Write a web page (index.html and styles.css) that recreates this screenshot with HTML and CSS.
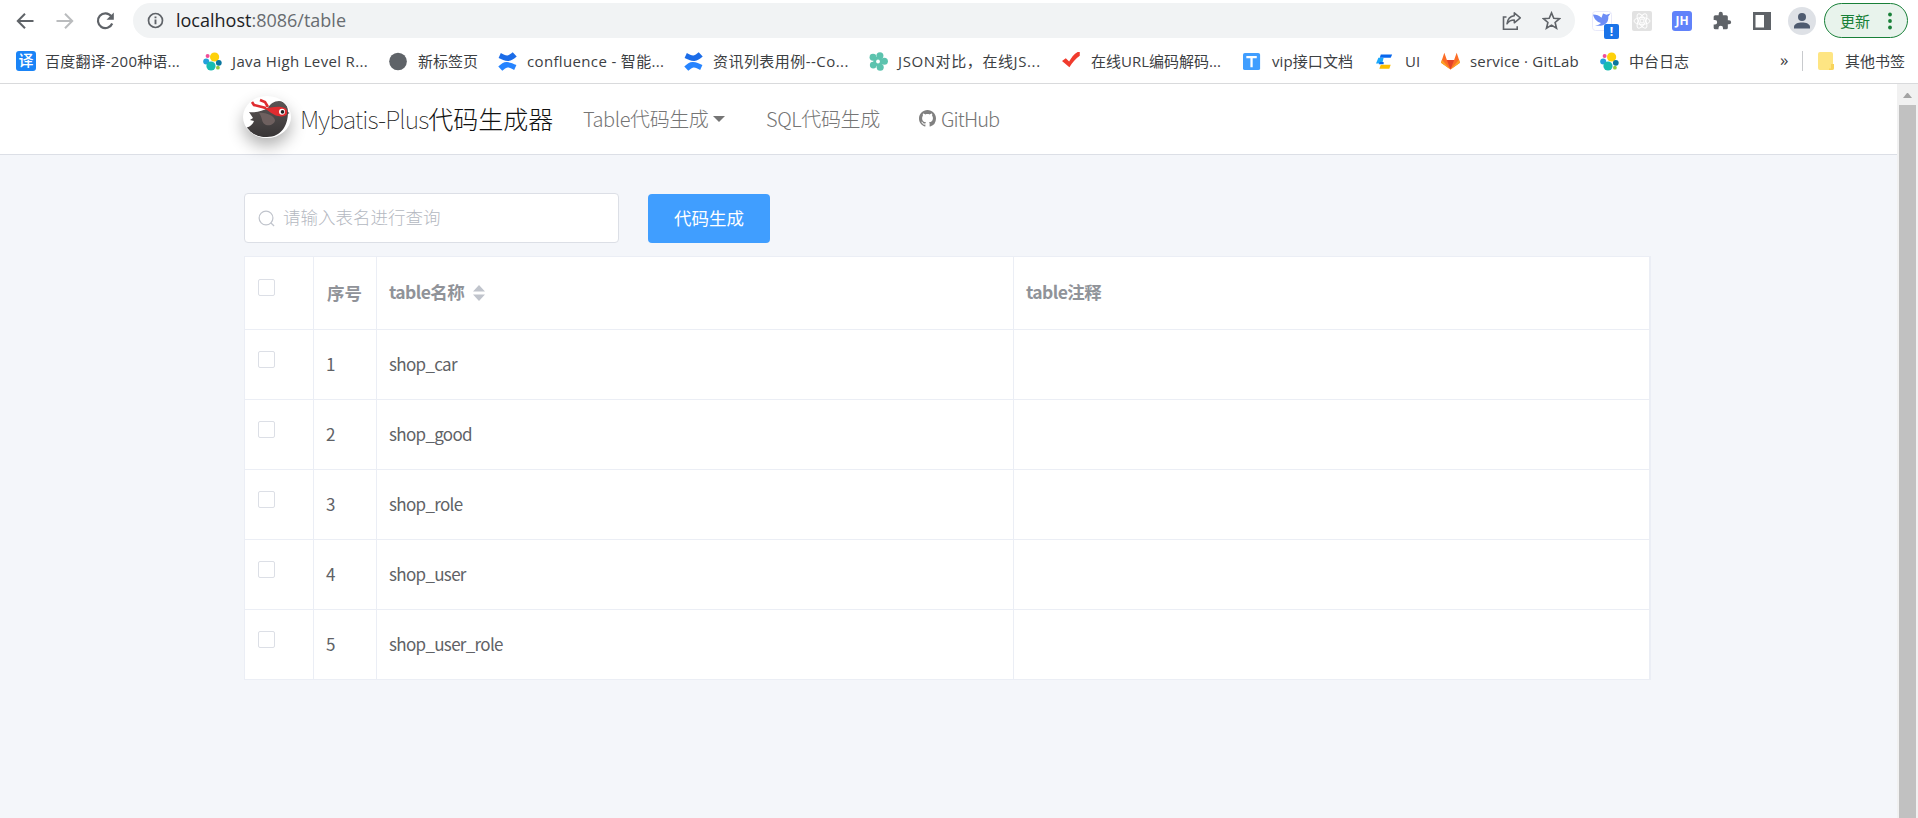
FILE: index.html
```html
<!DOCTYPE html>
<html lang="zh-CN">
<head>
  <meta charset="UTF-8">
  <title>Mybatis-Plus代码生成器</title>
  <link rel="stylesheet" href="styles.css">
</head>
<body>
  <svg class="defs" width="0" height="0">
    <symbol id="elastic" viewBox="0 0 19 19">
      <circle cx="11.6" cy="5" r="4.600" fill="#fed10a"/>
      <circle cx="4.6" cy="4" r="2" fill="#f04e98"/>
      <circle cx="3.2" cy="9.400" r="3" fill="#24a0dc"/>
      <circle cx="15.800" cy="10.800" r="2.900" fill="#0b779f"/>
      <circle cx="8" cy="14" r="4.600" fill="#17bcb2"/>
      <circle cx="14.900" cy="15.700" r="1.900" fill="#93c83e"/>
    </symbol>
    <symbol id="confluence" viewBox="0 0 20 20">
      <path d="M3 1c3 1.800 5 2.800 7 2.600 2.200-.3 3.500-2 5.500-3.300l4.200 4.500C16.500 7.500 14 9.600 10.500 9.400 7 9.200 4 7.800.6 6.200z" fill="#1b6ce8"/>
      <path d="M17 19c-3-1.800-5-2.800-7-2.600-2.200.3-3.500 2-5.500 3.300L.3 15.200c3.200-2.700 5.700-4.800 9.200-4.600 3.500.2 6.500 1.600 9.900 3.200z" fill="#2684ff"/>
    </symbol>
  </svg>

  <div class="browser">
    <div class="toolbar">
      <svg class="nav-btn" viewBox="0 0 20 20"><path d="M18.500 10H3M10 2.800L2.800 10l7.200 7.200" fill="none" stroke="#5f6368" stroke-width="2"/></svg>
      <svg class="nav-btn" viewBox="0 0 20 20"><path d="M1.500 10H17M10 2.800L17.200 10 10 17.200" fill="none" stroke="#babcbe" stroke-width="2"/></svg>
      <svg class="nav-btn" viewBox="0 0 20 20"><path d="M16.200 5.200A7.400 7.400 0 1 0 17.200 12.500" fill="none" stroke="#5f6368" stroke-width="2.200"/><path d="M18.800 1.500v7.300h-7.300z" fill="#5f6368"/></svg>
      <div class="address">
        <svg class="info" viewBox="0 0 18 18"><circle cx="9" cy="9" r="7.400" fill="none" stroke="#5f6368" stroke-width="1.800"/><path d="M9 8v5M9 4.700v2" stroke="#5f6368" stroke-width="2"/></svg>
        <span class="url">localhost<span>:8086/table</span></span>
        <svg class="share" viewBox="0 0 20 20"><path d="M4.500 6H1.500v12.200h13.700v-3" fill="none" stroke="#5f6368" stroke-width="1.600"/><path d="M12.300 1.800l6 5-6 5V9c-3.500 0-5.600 1.200-7.300 3.800.5-4.200 2.800-7.600 7.300-8.100z" fill="none" stroke="#5f6368" stroke-width="1.500" stroke-linejoin="round"/></svg>
        <svg class="star" viewBox="0 0 20 20"><path d="M10 2l2.400 5.600 6.100.5-4.700 4 1.500 6L10 14.900 4.700 18.100l1.500-6-4.700-4 6.100-.5z" fill="none" stroke="#5f6368" stroke-width="1.700"/></svg>
      </div>
      <div class="extensions">
        <span class="ext bird">
          <svg viewBox="0 0 20 20"><rect x=".5" y=".5" width="19" height="19" rx="3" fill="#fff" stroke="#e8e9fa"/><path d="M1 3.500c3.500 0 6 1 8.500 3.200L11 2.500l3.500 1.200 4-1.200-2.200 3C17 12 12 16 3 14.500c3-.4 4.500-1 6-2.500C5 11 2 8 1 3.500z" fill="#6d8df6"/></svg>
          <b>!</b>
        </span>
        <svg class="ext" viewBox="0 0 20 20"><rect width="20" height="20" rx="2" fill="#e2e2e2"/><g fill="none" stroke="#fff" stroke-width="1"><circle cx="10" cy="10" r="2"/><ellipse cx="10" cy="10" rx="8" ry="3.400"/><ellipse cx="10" cy="10" rx="8" ry="3.400" transform="rotate(60 10 10)"/><ellipse cx="10" cy="10" rx="8" ry="3.400" transform="rotate(120 10 10)"/></g></svg>
        <span class="ext jh">JH</span>
        <svg class="ext" viewBox="0 0 24 24"><path d="M20.500 11H19V7a2 2 0 0 0-2-2h-4V3.500a2.500 2.500 0 0 0-5 0V5H4a2 2 0 0 0-2 2v3.800h1.500a2.700 2.700 0 0 1 0 5.400H2V20a2 2 0 0 0 2 2h3.800v-1.500a2.700 2.700 0 0 1 5.400 0V22H17a2 2 0 0 0 2-2v-4h1.500a2.500 2.500 0 0 0 0-5z" fill="#5f6368"/></svg>
        <svg class="ext" viewBox="0 0 20 20"><path d="M1 1h18v18H1zM3.500 4v12.500H12V4z" fill="#5f6368" fill-rule="evenodd"/></svg>
      </div>
      <svg class="avatar" viewBox="0 0 28 28"><circle cx="14" cy="14" r="14" fill="#dee1e6"/><circle cx="14" cy="10" r="4" fill="#4f5b70"/><path d="M6 21.500v-1.800c0-2.700 4-4.200 8-4.200s8 1.500 8 4.200v1.800z" fill="#4f5b70"/></svg>
      <div class="update">更新<svg viewBox="0 0 4 18"><circle cx="2" cy="2.500" r="1.900"/><circle cx="2" cy="9" r="1.900"/><circle cx="2" cy="15.500" r="1.900"/></svg></div>
    </div>

    <div class="bookmarks">
      <div class="bookmark"><span class="fanyi">译</span><span class="label w-fanyi">百度翻译-200种语...</span></div>
      <div class="bookmark"><svg><use href="#elastic"/></svg><span class="label w-java">Java High Level R...</span></div>
      <div class="bookmark"><svg viewBox="0 0 20 20"><circle cx="9.500" cy="10" r="9.300" fill="#5f6368"/></svg><span class="label w-newtab">新标签页</span></div>
      <div class="bookmark"><svg><use href="#confluence"/></svg><span class="label w-conf">confluence - 智能...</span></div>
      <div class="bookmark"><svg><use href="#confluence"/></svg><span class="label w-news">资讯列表用例--Co...</span></div>
      <div class="bookmark"><svg viewBox="0 0 20 20"><g fill="#5cc3ae"><circle cx="4.200" cy="5.500" r="3.600"/><circle cx="11.500" cy="4" r="3.700"/><circle cx="16.200" cy="9.800" r="3.700"/><circle cx="11.800" cy="16" r="3.700"/><circle cx="4.500" cy="13.800" r="3.600"/><circle cx="9.500" cy="10" r="5"/></g><circle cx="9.500" cy="10" r="2" fill="#fff"/></svg><span class="label w-json">JSON对比，在线JS...</span></div>
      <div class="bookmark"><svg viewBox="0 0 20 20"><path d="M0 9.500l4-3 3.500 3.500C10 5.500 13 1.500 17.500-.5h1.200V4C14.500 7 11 11 7.800 16z" fill="#f03b2d"/></svg><span class="label w-url">在线URL编码解码...</span></div>
      <div class="bookmark"><svg viewBox="0 0 20 20"><rect y="1" width="18" height="18" rx="2" fill="#409eff"/><path d="M3.500 5.500h11M9 5.500V16" stroke="#fff" stroke-width="2.400"/></svg><span class="label w-vip">vip接口文档</span></div>
      <div class="bookmark"><svg viewBox="0 0 20 20"><path d="M5 2.500h12L15.500 6H4z" fill="#0867ee"/><path d="M2.500 6H8l-1.500 6H0z" fill="#19a8fa"/><path d="M4 10.500h4V13H3z" fill="#0867ee"/><path d="M5 13.500h10.500L14 17.500H3.500z" fill="#fdbf00"/></svg><span class="label w-ui">UI</span></div>
      <div class="bookmark"><svg viewBox="0 0 20 20"><path d="M10 18.500L0 11.200 3.500.8l2.700 7.500h7.600L16.500.8 20 11.200z" fill="#fc6d26"/><path d="M10 18.500L6.200 8.300h7.600z" fill="#e24329"/><path d="M10 18.500L0 11.200l1-3zM10 18.500l10-7.300-1-3z" fill="#fca326"/></svg><span class="label w-gitlab">service · GitLab</span></div>
      <div class="bookmark"><svg><use href="#elastic"/></svg><span class="label w-log">中台日志</span></div>
      <span class="more">»</span>
      <span class="divider"></span>
      <div class="bookmark"><svg class="folder" viewBox="0 0 16 20"><path d="M2 1h11a2 2 0 0 1 2 2v10h1v4a2 2 0 0 1-2 2H2a2 2 0 0 1-2-2V3a2 2 0 0 1 2-2z" fill="#fee583"/><path d="M15 13h-2v4.500h-2V19h3a2 2 0 0 0 2-2v-4z" fill="#f8d45b"/></svg><span class="label w-other">其他书签</span></div>
    </div>
  </div>

  <div class="viewport">
    <div class="page">
      <nav class="navbar">
        <svg class="logo" viewBox="0 0 48 42">
          <defs><clipPath id="clip"><ellipse cx="24" cy="21" rx="23.500" ry="20.500"/></clipPath><linearGradient id="body" x2="0" y2="1"><stop stop-color="#5a5454"/><stop offset="1" stop-color="#383536"/></linearGradient></defs>
          <ellipse cx="24" cy="21" rx="23.500" ry="20.500" fill="#fff"/>
          <g clip-path="url(#clip)">
            <path d="M2 32c5-1 8-4 9-7l-4-1 3-2-4-6c6 1 14-1 19-4 2-4 6-7 11-7 6 0 9 5 9 11 0 14-7 25-21 25C14 41 7 38 2 32z" fill="url(#body)"/>
            <path d="M16 17c5-1 15 2 16 7 0 4-5 6-9 5-5-2-3-7-7-12z" fill="#6e605f"/>
          </g>
          <path d="M20 12c8 0 15-3 22 0 2 1 3 4 2 6-1 2-5 3-9 2-6-1-9-6-15-8z" fill="#e02c30"/>
          <path d="M23 12L11 9 9 6M25 11l-3-5-5-2" fill="none" stroke="#e02c30" stroke-width="2.600"/>
          <circle cx="39" cy="15.700" r="3" fill="#fff"/><circle cx="39.500" cy="15.900" r="1.800" fill="#222"/>
          <path d="M44 15.500l2.500 1.500-2.500 1.500z" fill="#444"/>
        </svg>
        <a class="brand"><span>Mybatis-Plus</span>代码生成器</a>
        <a class="nav-link table-link">Table代码生成<i class="caret"></i></a>
        <a class="nav-link sql-link">SQL代码生成</a>
        <a class="nav-link github-link"><svg viewBox="0 0 16 16"><path d="M8 0C3.580 0 0 3.580 0 8c0 3.540 2.290 6.530 5.470 7.590.4.070.55-.17.55-.38 0-.19-.01-.82-.01-1.490-2.010.37-2.530-.49-2.690-.94-.09-.23-.48-.94-.82-1.130-.28-.15-.68-.52-.01-.53.63-.01 1.080.58 1.230.82.72 1.210 1.870.87 2.330.66.070-.52.28-.87.51-1.070-1.780-.2-3.640-.89-3.640-3.950 0-.87.31-1.590.82-2.150-.08-.2-.36-1.020.08-2.120 0 0 .67-.21 2.200.82.640-.18 1.320-.27 2-.27s1.360.09 2 .27c1.530-1.040 2.200-.82 2.200-.82.440 1.100.16 1.920.08 2.120.51.560.82 1.270.82 2.150 0 3.070-1.870 3.750-3.650 3.950.29.25.54.73.54 1.480 0 1.070-.01 1.930-.01 2.200 0 .21.15.46.55.38A8.010 8.010 0 0 0 16 8c0-4.420-3.580-8-8-8z"/></svg>GitHub</a>
      </nav>

      <main>
        <div class="search-row">
          <div class="search">
            <svg viewBox="0 0 18 18"><circle cx="8.500" cy="8.500" r="7.300"/><path d="M13.500 13.500l3.500 3.500"/></svg>
            <span>请输入表名进行查询</span>
          </div>
          <button>代码生成</button>
        </div>

        <table>
          <colgroup><col class="col-check"><col class="col-index"><col class="col-name"><col></colgroup>
          <thead>
            <tr>
              <th><i class="checkbox"></i></th>
              <th class="index-head">序号</th>
              <th>table名称<svg class="sort" viewBox="0 0 12 16"><path d="M6 0l6 6.500H0zM6 16l6-6.500H0z"/></svg></th>
              <th>table注释</th>
            </tr>
          </thead>
          <tbody>
            <tr><td><i class="checkbox"></i></td><td>1</td><td>shop_car</td><td></td></tr>
            <tr><td><i class="checkbox"></i></td><td>2</td><td>shop_good</td><td></td></tr>
            <tr><td><i class="checkbox"></i></td><td>3</td><td>shop_role</td><td></td></tr>
            <tr><td><i class="checkbox"></i></td><td>4</td><td>shop_user</td><td></td></tr>
            <tr><td><i class="checkbox"></i></td><td>5</td><td>shop_user_role</td><td></td></tr>
          </tbody>
        </table>
      </main>
    </div>
    <div class="scrollbar"><i class="up"></i><i class="thumb"></i></div>
  </div>
</body>
</html>
```
FILE: styles.css
```css
* {
  box-sizing: border-box;
}

body {
  margin: 0;
  height: 818px;
  overflow: hidden;
  display: flex;
  flex-direction: column;
  font-family: "Noto Sans CJK SC", sans-serif;
  background: #f4f6fa;
}

svg {
  display: block;
  flex: none;
}

.defs {
  position: absolute;
}

/* browser */
.browser {
  height: 84px;
  background: #fff;
  border-bottom: 1px solid #d9dadc;
  font-family: "Open Sans", "Noto Sans CJK SC", sans-serif;
  color: #3c4043;
}

.toolbar {
  display: flex;
  align-items: center;
  height: 38px;
  padding: 3px 10px 0 15px;
}

.nav-btn {
  width: 20px;
  height: 20px;
  margin-right: 20px;
}

.address {
  display: flex;
  align-items: center;
  width: 1442px;
  height: 35px;
  margin-left: -2px;
  padding: 0 14px;
  border-radius: 18px;
  background: #f1f3f4;
}

.info {
  width: 17px;
  height: 17px;
}

.url {
  margin: -2px auto 0 12px;
  font-size: 18px;
  line-height: 24px;
  color: #202124;
}

.url span {
  color: #686c70;
}

.share {
  width: 20px;
  height: 20px;
}

.star {
  width: 19px;
  height: 19px;
  margin-left: 20px;
}

.extensions {
  display: flex;
  gap: 20px;
  margin-left: 17px;
}

.ext {
  width: 20px;
  height: 20px;
}

.bird {
  position: relative;
}

.bird b {
  position: absolute;
  left: 12px;
  top: 13px;
  width: 15px;
  height: 15px;
  border-radius: 2px;
  background: #1a73e8;
  color: #fff;
  font-size: 12px;
  line-height: 15px;
  text-align: center;
}

.jh {
  border-radius: 3px;
  background: #6182fa;
  color: #fff;
  font-size: 12px;
  font-weight: 700;
  line-height: 20px;
  text-align: center;
}

.avatar {
  width: 28px;
  height: 28px;
  margin-left: 16px;
}

.update {
  display: flex;
  align-items: center;
  justify-content: space-between;
  flex: none;
  width: 84px;
  height: 35px;
  margin-left: 8px;
  padding: 0 15px;
  border: 1px solid #188038;
  border-radius: 18px;
  background: #e8f3ec;
  color: #188038;
  font-size: 15px;
}

.update svg {
  width: 4px;
  height: 18px;
  fill: #188038;
}

.bookmarks {
  display: flex;
  align-items: center;
  height: 46px;
  padding-left: 16px;
  font-size: 15px;
}

.bookmark {
  display: flex;
  align-items: center;
}

.bookmark svg {
  width: 19px;
  height: 19px;
}

.fanyi {
  width: 20px;
  height: 20px;
  margin-right: -1px;
  border-radius: 3px;
  background: #1a84f7;
  color: #fff;
  font-size: 15px;
  font-weight: 500;
  line-height: 19px;
  text-align: center;
}

.label {
  margin-left: 10px;
  padding-right: 1px;
  white-space: nowrap;
  line-height: 22px;
}

.w-fanyi { width: 158px; letter-spacing: 0.2px; }
.w-java { width: 157px; letter-spacing: 0.35px; }
.w-newtab { width: 80px; }
.w-conf { width: 157px; letter-spacing: 0.35px; }
.w-news { width: 156px; letter-spacing: 0.45px; }
.w-json { width: 164px; letter-spacing: 0.6px; }
.w-url { width: 152px; }
.w-vip { width: 104px; letter-spacing: 0.1px; }
.w-ui { width: 36px; }
.w-gitlab { width: 130px; letter-spacing: 0.2px; }
.w-log { width: 151px; }

.more {
  width: 22px;
  margin-top: -3px;
  font-size: 17px;
  line-height: 20px;
}

.divider {
  width: 1px;
  height: 20px;
  margin-right: 15px;
  background: #c8cacd;
}

.bookmark .folder {
  width: 16px;
  height: 20px;
}

.w-other {
  margin-left: 11px;
}

/* page */
.viewport {
  display: flex;
  flex: 1;
}

.page {
  flex: 1;
}

.navbar {
  display: flex;
  align-items: center;
  height: 71px;
  padding-left: 243px;
  background: #fff;
  border-bottom: 1px solid #dcdfe6;
  font-weight: 300;
}

.logo {
  width: 48px;
  height: 42px;
  margin-top: -5px;
  border-radius: 50%;
  box-shadow: 0 8px 16px rgba(0, 0, 0, 0.3);
}

.brand {
  width: 283px;
  margin: -3px 0 0 9px;
  font-size: 25px;
  line-height: 36px;
  color: #111;
  white-space: nowrap;
}

.brand span {
  color: #222;
  font-weight: 100;
  letter-spacing: -0.9px;
}

.nav-link {
  display: flex;
  align-items: center;
  margin-top: -1px;
  font-size: 20px;
  line-height: 30px;
  letter-spacing: -0.4px;
  color: #757575;
  white-space: nowrap;
}

.table-link {
  width: 183px;
}

.sql-link {
  width: 153px;
}

.github-link {
  letter-spacing: -0.9px;
}

.github-link svg {
  width: 17px;
  height: 17px;
  margin-right: 5px;
  fill: #808080;
}

.caret {
  margin-left: 5px;
  border: 6px solid transparent;
  border-top-color: #757575;
  border-bottom: 0;
}

main {
  width: 1407px;
  margin: 38px 0 0 244px;
}

.search-row {
  display: flex;
  gap: 29px;
  height: 50px;
}

.search {
  display: flex;
  align-items: center;
  width: 375px;
  height: 50px;
  padding-left: 13px;
  border: 1px solid #dcdfe6;
  border-radius: 4px;
  background: #fff;
  color: #b4b8c1;
  font-size: 17.5px;
  font-weight: 300;
}

.search span {
  margin-top: -3px;
}

.search svg {
  width: 17px;
  height: 17px;
  margin-right: 8px;
  fill: none;
  stroke: #c0c4cc;
  stroke-width: 1.3;
}

button {
  width: 122px;
  height: 49px;
  margin-top: 1px;
  padding: 0 0 3px;
  border: 0;
  border-radius: 4px;
  background: #409eff;
  color: #fff;
  font: 400 17.5px "Noto Sans CJK SC", sans-serif;
}

table {
  width: 1407px;
  margin-top: 13px;
  border: 1px solid #ebeef5;
  border-spacing: 0;
  table-layout: fixed;
  background: #fff;
  color: #606266;
  font-size: 17px;
}

.col-check { width: 69px; }
.col-index { width: 63px; }
.col-name { width: 637px; }

th, td {
  height: 70px;
  padding: 0 0 2px 12px;
  border-right: 1px solid #ebeef5;
  border-bottom: 1px solid #ebeef5;
  text-align: left;
  line-height: 26px;
  letter-spacing: -0.68px;
}

th {
  height: 73px;
  color: #909399;
  font-size: 17.5px;
  font-weight: 700;
  letter-spacing: -0.6px;
}

.index-head {
  padding: 0 0 0 13px;
  letter-spacing: 0;
}

tbody tr:last-child td {
  height: 69px;
  border-bottom: 0;
}

.checkbox {
  display: block;
  width: 17px;
  height: 17px;
  margin: -9px 0 0 1px;
  border: 1px solid #dcdfe6;
  border-radius: 2px;
}

.sort {
  display: inline-block;
  width: 12px;
  height: 16px;
  margin-left: 9px;
  vertical-align: -2px;
  fill: #c0c4cc;
}

.scrollbar {
  display: flex;
  flex-direction: column;
  width: 21px;
  padding: 0 2px;
  background: #f1f1f1;
}

.up {
  height: 0;
  margin: 9px 4px 7px;
  border: 4.500px solid transparent;
  border-top: 0;
  border-bottom: 5px solid #a3a3a3;
}

.thumb {
  flex: 1;
  background: #c1c1c1;
}
```
